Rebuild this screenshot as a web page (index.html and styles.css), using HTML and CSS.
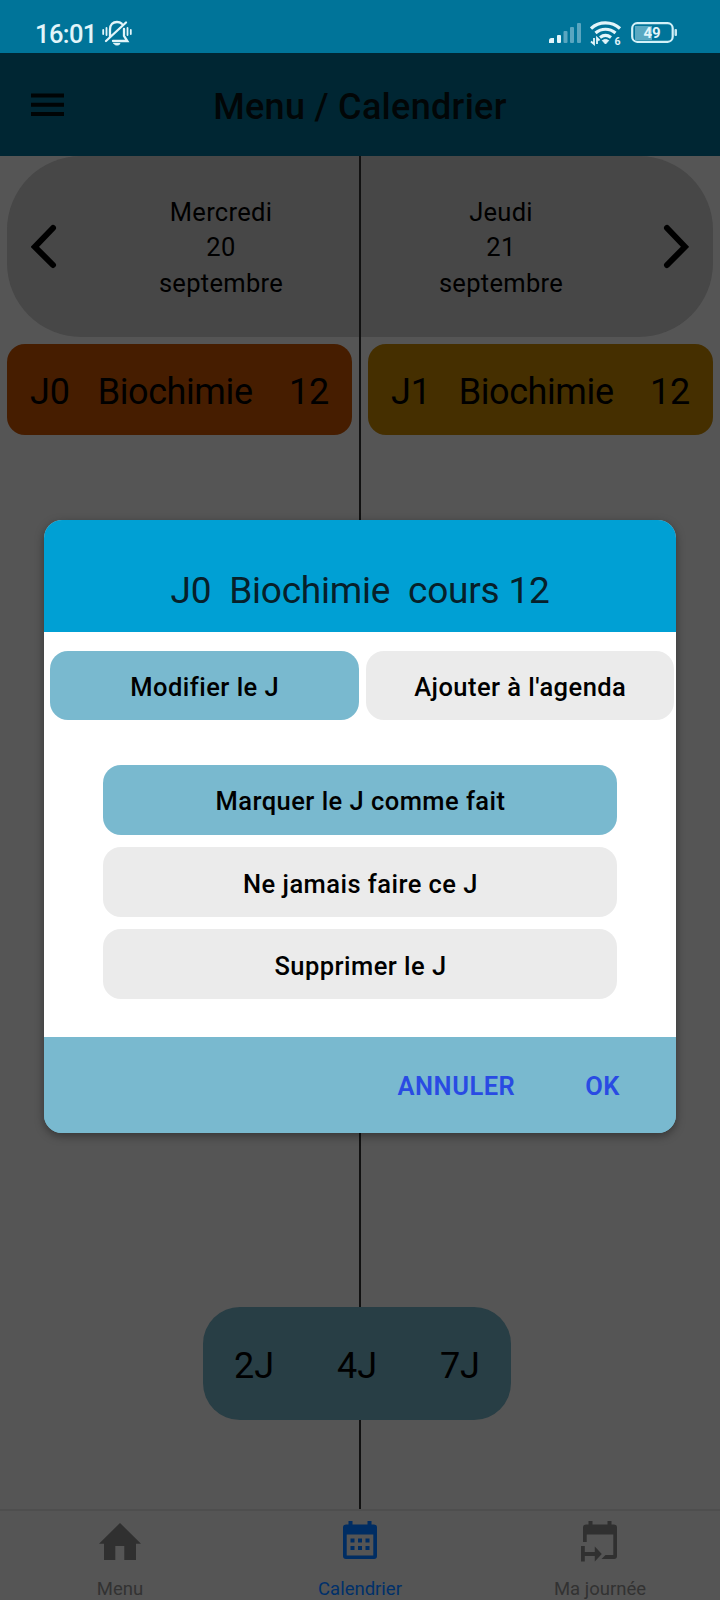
FILE: index.html
```html
<!DOCTYPE html>
<html lang="fr">
<head>
<meta charset="utf-8">
<title>Calendrier</title>
<link rel="stylesheet" href="styles.css">
</head>
<body>
<div class="screen">
  <div class="status">
    <span class="clock">16:01</span>
    <svg class="bell" width="30" height="26" viewBox="0 0 30 26" fill="none" stroke="#e2f5fa" stroke-width="2.300" stroke-linecap="round">
      <path d="M8 17V9.500C8 4.500 11 2 15 2c2 0 3.500.6 4.700 1.700M22 9v7l3.300 5H11M4 21L24 2.500"/>
      <path d="M12 23.500h6c-.5 1.200-1.500 1.500-3 1.500s-2.500-.3-3-1.500z" fill="#e2f5fa" stroke-width="1"/>
      <path d="M4.500 8v7M1.200 10v4M25.500 8v7M28.800 10v4" stroke-width="1.800"/>
    </svg>
    <svg class="signal" width="33" height="22" viewBox="0 0 33 22" fill="#e2f5fa">
      <path d="M0 21v-2.500q0-2.500 2.500-2.500H5v5z"/>
      <rect x="8" y="13" width="4" height="8" rx="1"/>
      <g fill="#5aa6c0"><rect x="14.500" y="9" width="4" height="12" rx="1"/><rect x="21" y="5" width="4" height="16" rx="1"/><rect x="28" y="1" width="4" height="20" rx="1"/></g>
    </svg>
    <svg class="wifi" width="34" height="30" viewBox="0 0 34 30" fill="none" stroke="#e2f5fa">
      <path d="M1 7.500C9 0 22 0 30 7.500M5.500 12c6-5 14-5 20 0M10 16.500c3.500-2.700 7.500-2.700 11 0" stroke-width="3.200"/>
      <path d="M15.500 23l-3.200-3.500q3.200-2.200 6.400 0z" fill="#e2f5fa" stroke-width="1"/>
      <path d="M4 17v6l-3-2.500M7 23v-6l2.500 2.500" stroke-width="1.800"/>
      <text x="24.500" y="24" class="wifi-num">6</text>
    </svg>
    <svg class="battery" width="47" height="22" viewBox="0 0 47 22">
      <rect x="4" y="4" width="17" height="14" fill="#5aa9c2"/>
      <rect x="1.200" y="1.200" width="40.500" height="18.600" rx="5" fill="none" stroke="#d3f1f8" stroke-width="2.200"/>
      <rect x="43.500" y="7" width="2.500" height="7" rx="1" fill="#c4e6f0"/>
      <text x="21" y="16" text-anchor="middle" class="battery-num">49</text>
    </svg>
  </div>
  <header class="header">
    <svg class="burger" width="33" height="24" viewBox="0 0 33 24"><path d="M0 2.500h33M0 11.700h33M0 21h33" stroke="#000405" stroke-width="4"/></svg>
    <h1 class="title">Menu / Calendrier</h1>
  </header>
  <main class="calendar">
    <div class="days">
      <svg class="arrow" width="26" height="46" viewBox="0 0 26 46"><path d="M22 4L3.800 22.800 22 41" fill="none" stroke="#000" stroke-width="6" stroke-linecap="round"/></svg>
      <div class="day">Mercredi<br>20<br>septembre</div>
      <div class="day">Jeudi<br>21<br>septembre</div>
      <svg class="arrow" width="26" height="46" viewBox="0 0 26 46"><path d="M4 4L22 22.800 4 41" fill="none" stroke="#000" stroke-width="6" stroke-linecap="round"/></svg>
    </div>
    <div class="lessons">
      <div class="lesson orange"><span>J0</span><span>Biochimie</span><span>12</span></div>
      <div class="lesson amber"><span>J1</span><span>Biochimie</span><span>12</span></div>
    </div>
    <div class="ranges"><span>2J</span><span>4J</span><span>7J</span></div>
    <div class="divider"></div>
  </main>
  <nav class="tabs">
    <div class="tab">
      <svg width="44" height="42" viewBox="0 0 44 42" fill="#303030"><path d="M22 2L1 22.700h5V39h11.300V25h9V39H38V22.700h5z"/></svg>
      <span>Menu</span>
    </div>
    <div class="tab active">
      <svg width="44" height="42" viewBox="0 0 44 42" fill="#002d63"><path fill-rule="evenodd" d="M10.500 0h4v3.500h15V0h4v3.500H36q3 0 3 3V35q0 3-3 3H8q-3 0-3-3V6.500q0-3 3-3h2.500zM8.700 13.500V34.500h26.600V13.500z"/><path d="M12.500 17.500h4v4h-4zM20 17.500h4v4h-4zM27.500 17.500h4v4h-4zM12.500 25h4v4h-4zM20 25h4v4h-4zM27.500 25h4v4h-4z"/></svg>
      <span>Calendrier</span>
    </div>
    <div class="tab">
      <svg width="44" height="42" viewBox="0 0 44 42" fill="#303030"><path d="M10.500 0h4v3.500h15V0h4v3.500H36q3 0 3 3V35q0 3-3 3H23.500l4-4h7.800V13.500H8.700V21H5V6.500q0-3 3-3h2.500zM3 25h3.800v6h10v-5.500l7 7.500-7 7.500V35h-10v5.500H3z"/></svg>
      <span>Ma journée</span>
    </div>
  </nav>
  <section class="dialog">
    <h2 class="dialog-title">J0&nbsp; Biochimie&nbsp; cours 12</h2>
    <div class="dialog-body">
      <div class="pair"><button class="btn blue">Modifier le J</button><button class="btn">Ajouter à l'agenda</button></div>
      <div class="stack">
        <button class="btn blue">Marquer le J comme fait</button>
        <button class="btn">Ne jamais faire ce J</button>
        <button class="btn">Supprimer le J</button>
      </div>
    </div>
    <footer class="dialog-footer"><span>ANNULER</span><span>OK</span></footer>
  </section>
</div>
</body>
</html>
```
FILE: styles.css
```css
* { box-sizing: border-box; }
body { margin: 0; font-family: Roboto, sans-serif; color: #000; }
.screen { position: relative; width: 720px; height: 1600px; overflow: hidden; display: flex; flex-direction: column; background: #555; }

.status { height: 53px; flex: none; display: flex; align-items: flex-start; background: #007499; color: #e2f5fa; }
.clock { margin: 19px 0 0 35px; width: 67px; font-size: 25.500px; letter-spacing: -.6px; line-height: 30px; font-weight: 500; }
.bell { margin-top: 20px; }
.signal { margin: 22px 0 0 417px; }
.wifi { margin: 21px 0 0 8px; }
.wifi-num { font-size: 10.500px; font-weight: 700; fill: #e2f5fa; stroke: none; }
.battery { margin: 22px 0 0 7px; }
.battery-num { font-size: 15px; font-weight: 700; fill: #e2f5fa; }

.header { height: 103px; flex: none; display: flex; align-items: center; padding: 0 31px; background: #002633; }
.burger { flex: none; margin-top: 1px; }
.title { flex: 1; margin: 4px 33px 0 0; text-align: center; font-size: 36px; font-weight: 500; letter-spacing: .3px; line-height: 44px; color: #020607; }

.calendar { position: relative; flex: 1; display: flex; flex-direction: column; }
.days { height: 180.500px; margin: 0 7px; padding: 0 24px; display: flex; align-items: center; border-radius: 74px; background: #474747; }
.day { flex: 1; text-align: center; font-size: 25.500px; letter-spacing: .3px; line-height: 35.500px; padding-top: 3px; }
.day:nth-child(2) { padding-left: 24px; }
.day:nth-child(3) { padding-right: 22px; }
.arrow { flex: none; margin-top: 1px; }
.lessons { display: flex; gap: 16px; padding: 7.500px 7px 0; }
.lesson { flex: 1; height: 91px; padding: 4px 23px 0; display: flex; justify-content: space-between; align-items: center; border-radius: 18px; font-size: 36px; }
.lesson span:nth-child(2) { margin-left: -9px; letter-spacing: -.4px; }
.lesson span:nth-child(3) { letter-spacing: -.3px; }
.orange { background: #461d00; }
.amber { background: #452f00; }
.ranges { position: relative; z-index: 1; width: 308px; height: 113px; margin: auto 0 89px 203px; padding: 4px 31px 0; display: flex; justify-content: space-between; align-items: center; border-radius: 37px; background: #283e45; font-size: 36px; }
.divider { position: absolute; left: 359px; top: 0; bottom: 0; width: 2px; background: #111; }

.tabs { height: 91px; flex: none; display: flex; border-top: 2px solid #4e4e4e; background: #555; }
.tab { flex: 1; display: flex; flex-direction: column; align-items: center; padding-top: 10px; font-size: 18.500px; line-height: 24px; color: #323232; }
.tab svg { flex: none; }
.tab span { margin-top: 14px; }
.tab.active { color: #00306a; }

.dialog { position: absolute; z-index: 2; left: 44px; top: 520px; width: 632px; height: 613px; display: flex; flex-direction: column; overflow: hidden; border-radius: 18px; background: #79b9cf; box-shadow: 0 3px 10px rgba(0, 0, 0, .38); }
.dialog-title { height: 112px; flex: none; margin: 0; padding-top: 49px; text-align: center; font-size: 37px; font-weight: 400; letter-spacing: -.22px; line-height: 44px; white-space: nowrap; border-radius: 18px 18px 0 0; background: #00a0d4; color: #07202a; }
.dialog-body { flex: 1; padding: 19px 2px 0 6px; background: #fff; }
.pair { display: flex; gap: 7px; }
.btn { flex: 1; height: 69px; border: 0; border-radius: 18px; padding: 2px 0 0 1px; background: #ebebeb; color: #000; font: 500 25.500px Roboto, sans-serif; letter-spacing: .46px; }
.blue { background: #79b9cf; }
.stack { margin: 45px 57px 0 53px; display: flex; flex-direction: column; gap: 12.500px; }
.stack .btn { flex: none; height: 69.700px; }
.stack .btn + .btn { padding-top: 3px; }
.dialog-footer { height: 96px; flex: none; display: flex; justify-content: flex-end; align-items: center; gap: 70px; padding: 1px 56px 0 0; background: #79b9cf; color: #294be3; font-size: 25.500px; font-weight: 600; letter-spacing: .5px; }
```
